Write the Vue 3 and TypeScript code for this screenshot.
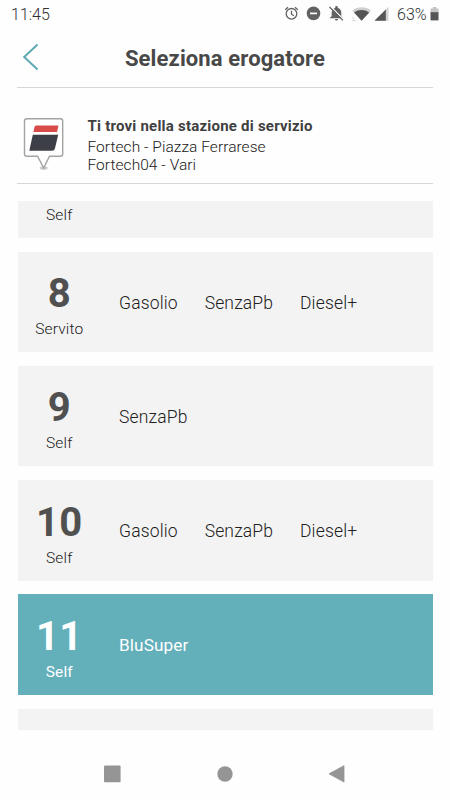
<script setup lang="ts">
interface Pump {
  key: string
  id?: number
  mode?: string
  fuels: string[]
  selected?: boolean
}

const pumps: Pump[] = [
  { key: 'top', mode: 'Self', fuels: [] },
  { key: 'p8', id: 8, mode: 'Servito', fuels: ['Gasolio', 'SenzaPb', 'Diesel+'] },
  { key: 'p9', id: 9, mode: 'Self', fuels: ['SenzaPb'] },
  { key: 'p10', id: 10, mode: 'Self', fuels: ['Gasolio', 'SenzaPb', 'Diesel+'] },
  { key: 'p11', id: 11, mode: 'Self', fuels: ['BluSuper'], selected: true },
  { key: 'bottom', fuels: [] },
]
</script>

<template>
  <div class="screen">
    <div class="status">
      <span class="clock">11:45</span>
      <svg class="status-icons" width="113" height="20" viewBox="0 0 113 20">
        <g fill="none" stroke="#626262" stroke-width="1.3">
          <circle cx="7.5" cy="9.8" r="5.3" />
          <path d="M7.5 6.7v3.5l2.4 1.5M1.2 5.7l2.8-2.5M13.8 5.7l-2.8-2.5" />
        </g>
        <circle cx="29.5" cy="9.4" r="6.8" fill="#626262" />
        <path d="M26 9.4h7" stroke="#fff" stroke-width="1.7" />
        <path d="M45.6 14.3h13.6l-1.9-2.2V8.7c0-2.5-1.3-4.3-3.5-4.8V3.2a1.3 1.3 0 0 0-2.6 0v.7c-2.2.5-3.5 2.3-3.5 4.8v3.4zM50.9 15h3.2a1.6 1.6 0 0 1-3.2 0z" fill="#626262" />
        <path d="M46.6 2.5l13 13" stroke="#fff" stroke-width="1.2" />
        <path d="M45.5 3l13.4 13.4" stroke="#626262" stroke-width="1.3" />
        <path d="M68.2 6.4C73.6 2.1 81.6 2.1 87 6.4L77.6 16.8z" fill="#d0d0d0" />
        <path d="M70 8.5C74.4 5.2 80.8 5.2 85.2 8.5L77.6 16.8z" fill="#555" />
        <path d="M68.3 14h2M68.3 16.4h3.2" stroke="#ccc" />
        <path d="M90.5 16.8L104.5 2.8v14z" fill="#d2d2d2" />
        <path d="M90.5 16.8L101.8 5.5V16.8z" fill="#555" />
      </svg>
      <span class="percent">63%</span>
      <svg class="battery" width="9" height="15" viewBox="0 0 9 15">
        <path d="M.5 1.5h2.3V0h3.4V1.5h2.3v5h-8z" fill="#c4c4c4" />
        <path d="M.5 5.2h8v8.2h-8z" fill="#555" />
      </svg>
    </div>

    <header class="header">
      <svg class="back" width="18" height="28" viewBox="0 0 18 28">
        <path d="M15.5 1.5L2.2 14l13.3 12.5" fill="none" stroke="#5fa9b3" stroke-width="2" />
      </svg>
      <h1>Seleziona erogatore</h1>
    </header>

    <section class="station">
      <svg class="pin" width="42" height="54" viewBox="0 0 42 54">
        <ellipse cx="20.7" cy="51" rx="4" ry="1.8" fill="#ccc" />
        <path d="M3.8 1.7h33.6q2.3 0 2.3 2.3v33q0 2.3-2.3 2.3H26.5L20.7 51 14.6 39.3H3.8Q1.5 39.3 1.5 37V4q0-2.3 2.3-2.3z" fill="#fff" stroke="#a3a3a3" stroke-width="1.4" />
        <path d="M13 8.4h22.5l-1.5 6.7H10.4l1-4.5q.4-2.2 1.6-2.2z" fill="#d84b48" />
        <path d="M9.8 17.7h25.4l-3.2 13.5q-.5 2.5-3 2.5H6.3z" fill="#3c3f45" />
      </svg>
      <div class="station-text">
        <strong>Ti trovi nella stazione di servizio</strong>
        <span>Fortech - Piazza Ferrarese</span>
        <span>Fortech04 - Vari</span>
      </div>
    </section>

    <main class="list">
      <article v-for="pump in pumps" :key="pump.key" class="pump" :class="{ selected: pump.selected }">
        <div class="ident">
          <span v-if="pump.id" class="number">{{ pump.id }}</span>
          <span v-if="pump.mode" class="mode">{{ pump.mode }}</span>
        </div>
        <div v-if="pump.fuels.length" class="fuels">
          <span v-for="fuel in pump.fuels" :key="fuel">{{ fuel }}</span>
        </div>
      </article>
    </main>

    <nav class="nav">
      <svg width="18" height="18" viewBox="0 0 18 18"><rect x="1" y=".6" width="16.6" height="16.6" rx="1" fill="#959595" /></svg>
      <svg width="18" height="18" viewBox="0 0 18 18"><circle cx="9" cy="9" r="7.7" fill="#959595" /></svg>
      <svg width="18" height="18" viewBox="0 0 18 18"><path d="M16 .7v16.4L1 8.8z" fill="#959595" stroke="#959595" stroke-width=".8" stroke-linejoin="round" /></svg>
    </nav>
  </div>
</template>

<style>
body {
  margin: 0;
  background: #fff;
}
</style>

<style scoped>
.screen {
  box-sizing: border-box;
  width: 450px;
  height: 800px;
  display: flex;
  flex-direction: column;
  overflow: hidden;
  background: #fefefe;
  color: #202020;
  font-family: Roboto, "Liberation Sans", sans-serif;
  font-weight: 300;
}

.status {
  flex: none;
  height: 28px;
  display: flex;
  align-items: center;
  padding: 0 11px;
  box-sizing: border-box;
  font-size: 16px;
  color: #303030;
}

.clock {
  flex: 1;
}

.status-icons,
.battery {
  flex: none;
}

.percent {
  width: 33px;
}

.header {
  flex: none;
  height: 60px;
  margin: 0 17px;
  box-sizing: border-box;
  border-bottom: 1px solid #d6d6d6;
  display: flex;
  align-items: center;
  padding: 0 0 1px 5px;
}

h1 {
  flex: 1;
  margin: 3px 23px 0 0;
  text-align: center;
  font-size: 22px;
  line-height: 28px;
  font-weight: 700;
  letter-spacing: 0.12px;
  color: #484848;
}

.station {
  flex: none;
  height: 96px;
  margin: 0 17px;
  box-sizing: border-box;
  border-bottom: 1px solid #d6d6d6;
  display: flex;
  padding: 29px 0 0 6px;
}

.station-text {
  display: flex;
  flex-direction: column;
  margin-left: 22.5px;
  font-size: 15.5px;
  letter-spacing: 0.05px;
  line-height: 18px;
}

.station-text strong {
  font-size: 15px;
  font-weight: 700;
  letter-spacing: 0.22px;
  margin-bottom: 3px;
  color: #404040;
}

.list {
  flex: none;
  height: 529px;
  margin: 17px 17.5px 0;
  overflow: hidden;
  display: flex;
  flex-direction: column;
  gap: 13.7px;
}

.pump {
  flex: none;
  height: 100.5px;
  background: #f3f3f3;
  display: flex;
}

.pump:first-child {
  height: 37.1px;
}

.pump:last-child {
  height: 21.5px;
}

.ident {
  box-sizing: border-box;
  width: 83.5px;
  padding-bottom: 13px;
  display: flex;
  flex-direction: column;
  align-items: center;
  justify-content: flex-end;
}

.number {
  font-size: 40px;
  line-height: 47px;
  font-weight: 700;
  letter-spacing: 0.3px;
  color: #505050;
}

.mode {
  margin-top: 3px;
  font-size: 15.5px;
  letter-spacing: 0.15px;
  line-height: 19px;
}

.fuels {
  display: flex;
  align-items: center;
  gap: 26.8px;
  margin-left: 18px;
  padding-top: 2px;
  font-size: 17.5px;
  letter-spacing: 0.16px;
}

.selected {
  background: #63afba;
  color: #fff;
  font-weight: 400;
}

.selected .fuels {
  padding-top: 0;
  font-size: 17.2px;
  letter-spacing: 0.1px;
}

.selected .number {
  color: #fff;
}

.nav {
  flex: 1;
  display: flex;
  justify-content: space-between;
  align-items: center;
  padding: 18px 104px 0 103px;
}
</style>
